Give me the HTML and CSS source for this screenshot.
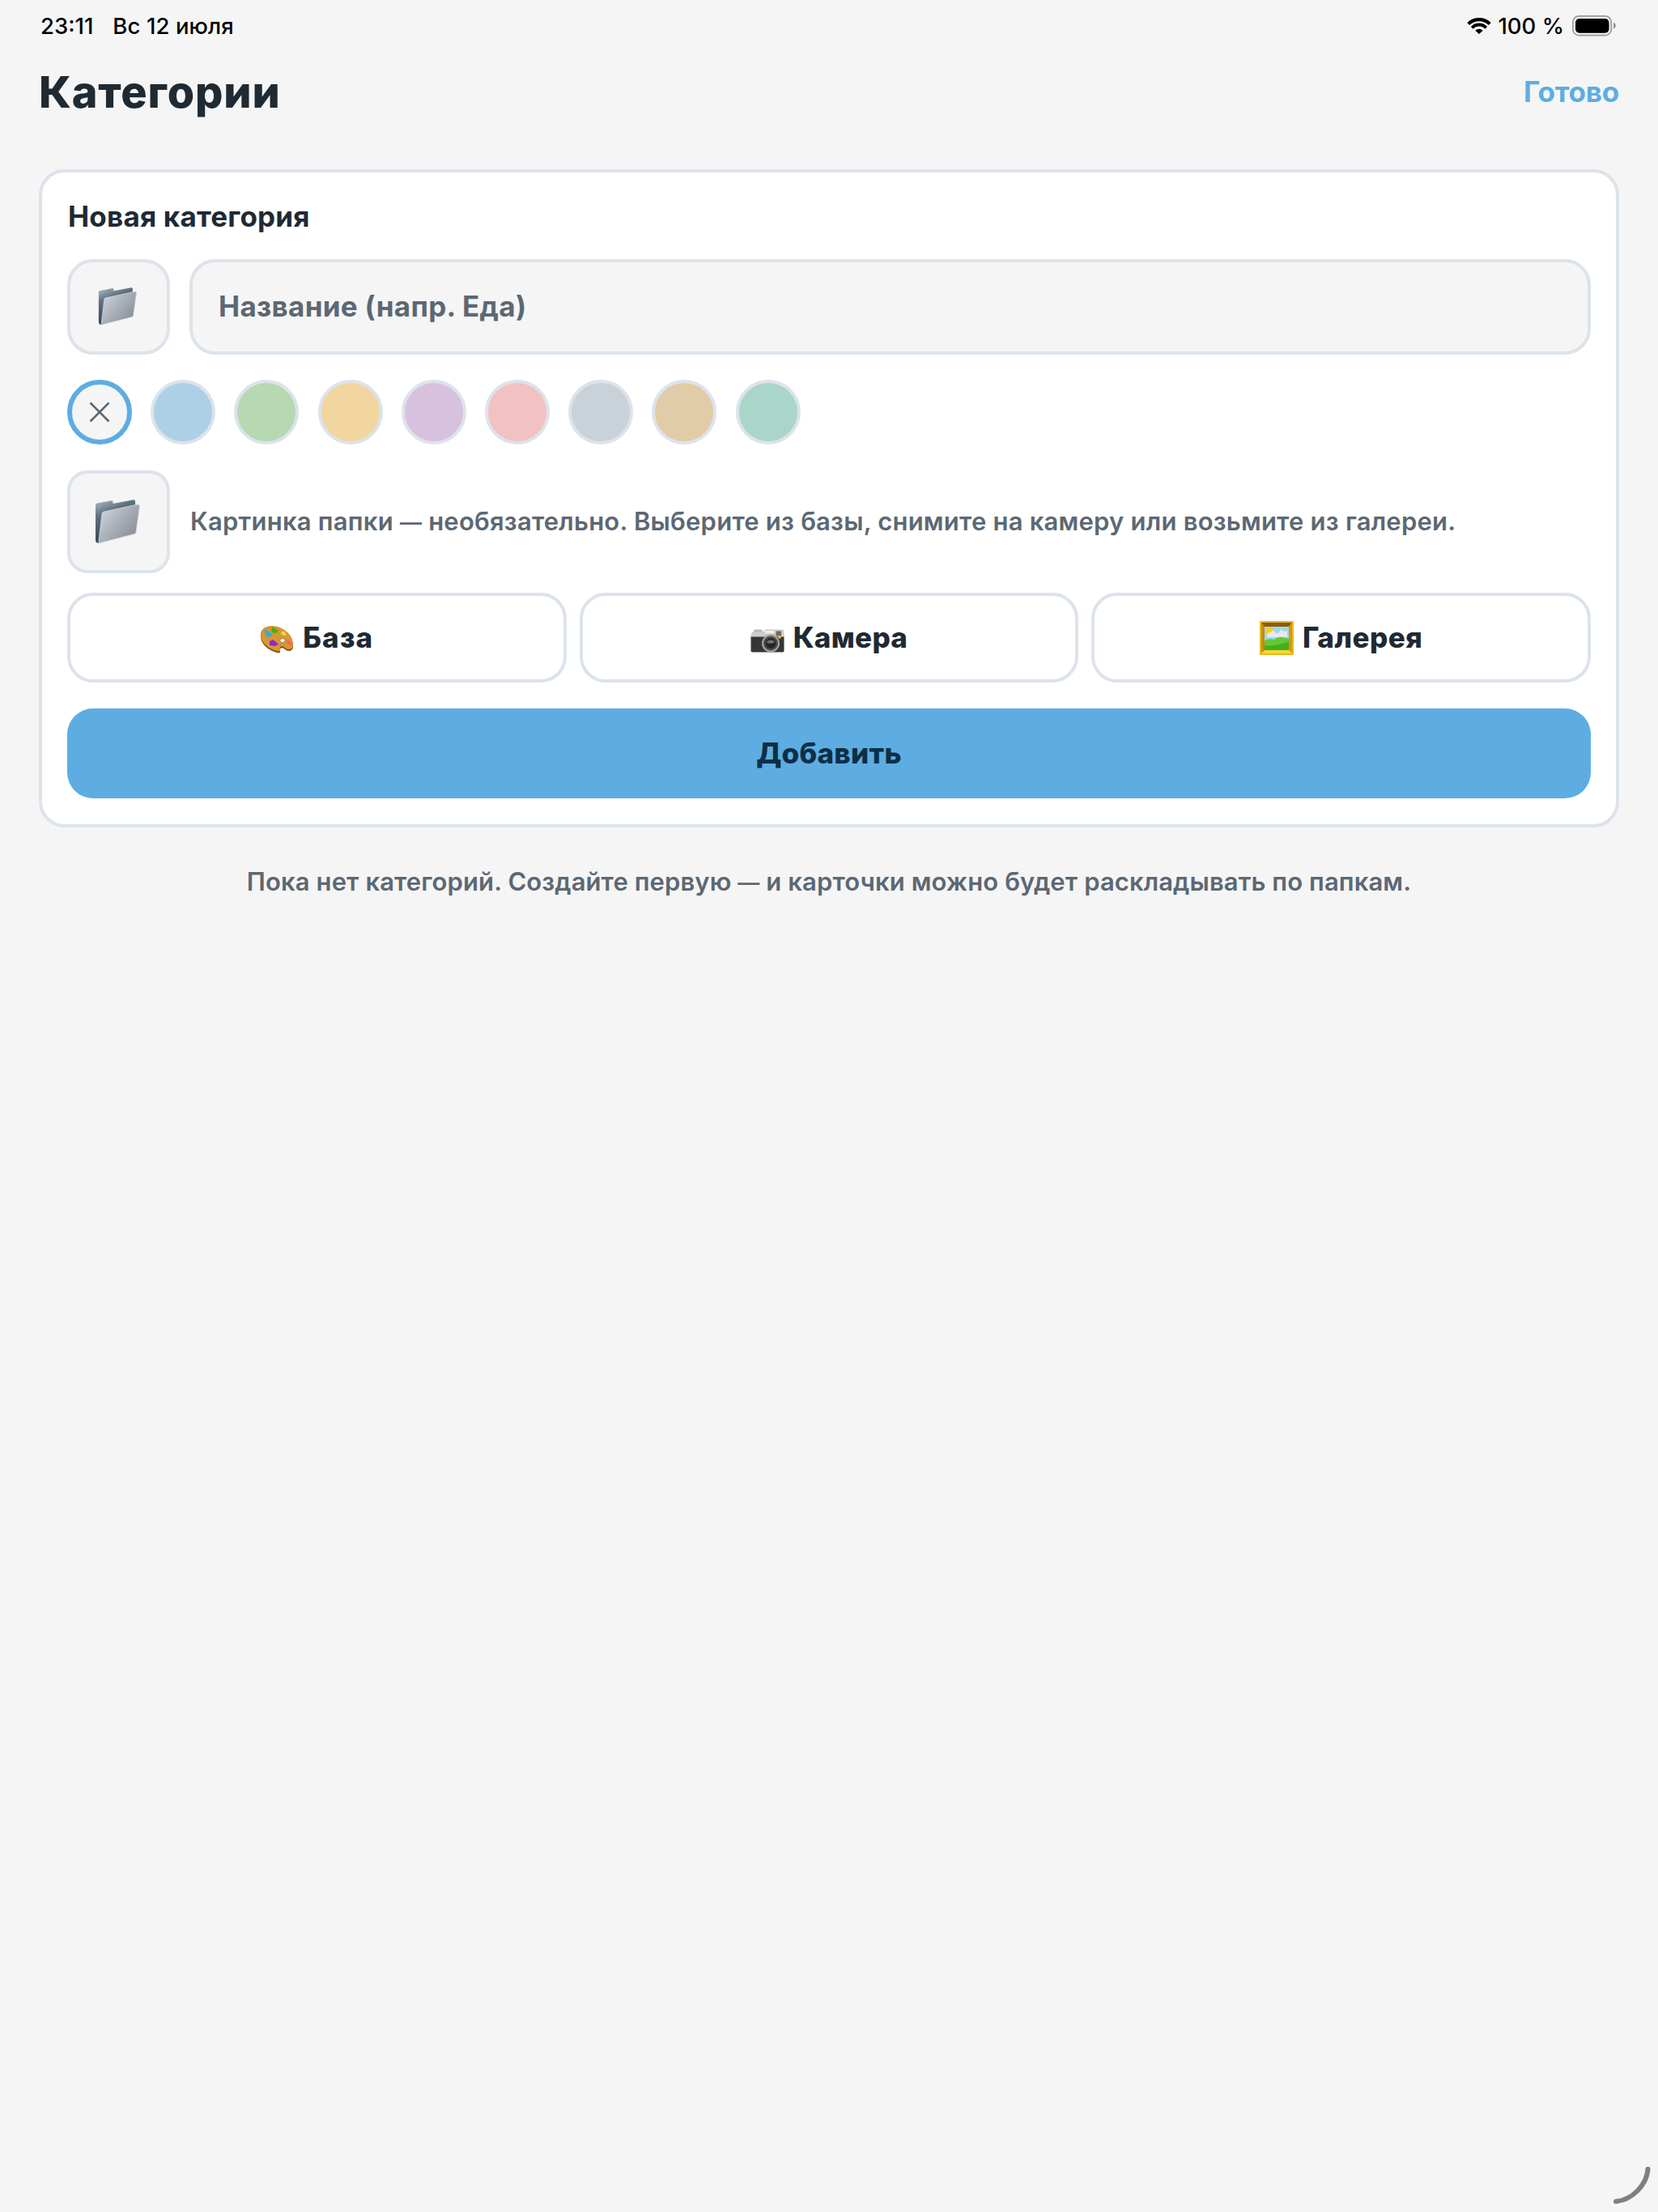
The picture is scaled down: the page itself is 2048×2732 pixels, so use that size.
FILE: index.html
```html
<!DOCTYPE html>
<html lang="ru">
  <head>
    <meta charset="UTF-8">
    <meta name="viewport" content="width=device-width, initial-scale=1.0">
    <title>Категории</title>
    <link rel="stylesheet" href="styles.css">
  </head>
  <body>
    <!-- Shared icons -->
    <svg class="defs" width="0" height="0">
      <defs>
        <linearGradient id="folder-back" x1="0" y1="0" x2="0.4" y2="1">
          <stop offset="0" stop-color="#b4c0c9"/>
          <stop offset="0.35" stop-color="#5f717f"/>
          <stop offset="1" stop-color="#2c3c49"/>
        </linearGradient>
        <linearGradient id="folder-front" x1="0" y1="0" x2="1" y2="0.8">
          <stop offset="0" stop-color="#d3dbe5"/>
          <stop offset="0.5" stop-color="#abb1b9"/>
          <stop offset="1" stop-color="#868b91"/>
        </linearGradient>
        <symbol id="folder" viewBox="0 0 56 56">
          <path d="M1 7Q1 5 3 4.600L21 1.200Q22.500 1 22.500 3V5L48 .2Q50 0 50 2V12L8 53Q1 55 1 50Z" fill="url(#folder-back)"/>
          <path d="M9 17.500Q9.300 15.500 11.300 15L53 6Q55.700 5.700 55.500 8L51 40Q50.700 42 49 42.500L7 53.500Q4.500 54 5 51Z" fill="url(#folder-front)" stroke="#d3dae1" stroke-width="0.800"/>
        </symbol>
      </defs>
    </svg>

    <div class="status-bar">
      <span class="status-time">23:11</span>
      <span class="status-date">Вс 12 июля</span>
      <svg class="wifi" viewBox="0 0 30 20">
        <path d="M1.800 7.600A18.500 18.500 0 0 1 28.200 7.600" fill="none" stroke="#000" stroke-width="4.200"/>
        <path d="M6.300 12.300A12 12 0 0 1 23.700 12.300" fill="none" stroke="#000" stroke-width="4"/>
        <path d="M10.300 15.700A6.500 6.500 0 0 1 19.700 15.700L15 20Z" fill="#000"/>
      </svg>
      <span class="status-percent">100 %</span>
      <svg class="battery" viewBox="0 0 55 26">
        <rect x="0.900" y="0.900" width="47.400" height="23.800" rx="7.500" fill="none" stroke="#999" stroke-width="1.700"/>
        <rect x="4" y="4" width="41.500" height="17.700" rx="4.800" fill="#000"/>
        <path d="M51 8.500Q54 10 54 12.800T51 17Z" fill="#999"/>
      </svg>
    </div>

    <header class="header">
      <h1>Категории</h1>
      <a class="done">Готово</a>
    </header>

    <main class="card">
      <h2>Новая категория</h2>

      <div class="name-row">
        <div class="icon-box">
          <svg class="folder-small"><use href="#folder"/></svg>
        </div>
        <div class="name-input"><span>Название (напр. Еда)</span></div>
      </div>

      <div class="colors">
        <div class="color none">
          <svg class="cross" viewBox="0 0 26 26"><path d="M1.500 1.500L24.500 24.500M24.500 1.500L1.500 24.500"/></svg>
        </div>
        <div class="color blue"></div>
        <div class="color green"></div>
        <div class="color yellow"></div>
        <div class="color purple"></div>
        <div class="color pink"></div>
        <div class="color gray"></div>
        <div class="color sand"></div>
        <div class="color mint"></div>
      </div>

      <div class="picture-row">
        <div class="picture-box">
          <svg class="folder-large"><use href="#folder"/></svg>
        </div>
        <p class="hint">Картинка папки <span class="dash">—</span> необязательно. Выберите из базы, снимите на камеру или возьмите из галереи.</p>
      </div>

      <div class="sources">
        <div class="button">
          <svg class="emoji" viewBox="0 0 42 42">
            <g transform="translate(0 5)">
              <path d="M1 14C0 5 7 1 15 1C29 1 42 13 41 26C40.500 32 34 32 31 29C28 26 24 27 25 30C26 33 24 34 21 33C10 30 2 23 1 14Z" fill="#7e5021" transform="translate(0 1)"/>
              <path d="M1 13C0 5 7 1 15 1C29 1 42 13 41 25C40.500 31 34 31 31 28C28 25 24 26 25 29C26 32 24 33 21 32C10 29 2 22 1 13Z" fill="#d69734"/>
              <ellipse cx="28" cy="19" rx="3.200" ry="2.500" fill="#fff" stroke="#8b5b26" stroke-width="0.700"/>
              <path d="M5 6L9 7L13 9L15 13L11 15L7 12Z" fill="#36a9dc"/>
              <path d="M15 2L18 4L22 6L22 9L17 10L14 7Z" fill="#38b51d"/>
              <path d="M26 8L30 8L33 12L30 13L27 12Z" fill="#f6d832"/>
              <path d="M12 20L16 18L20 21L23 24L18 26L12 25Z" fill="#9428c4"/>
              <path d="M33 18L37 20L40 24L37 25L34 22Z" fill="#fb6251"/>
            </g>
          </svg>
          <span class="label-base">База</span>
        </div>
        <div class="button">
          <svg class="emoji" viewBox="0 0 42 42">
            <g transform="translate(0 9.500)">
              <path d="M4 3Q4 1 6 1H13Q15 1 15 3V6H4Z" fill="#b9b9b9"/>
              <path d="M.5 9Q.5 4 4 4H16L18 1H39Q41.500 1 41.500 4V12H.5Z" fill="#cdcdcd"/>
              <path d="M.5 10H41.500V27Q41.500 29 40 29H2Q.5 29 .5 27Z" fill="#363636"/>
              <rect x="18" y="2.500" width="11" height="3.500" fill="#f7efd0"/>
              <rect x="31.500" y="3" width="6.500" height="6" fill="#74685d"/>
              <circle cx="36" cy="10.500" r="1.800" fill="#f2c71b"/>
              <circle cx="25" cy="18" r="11" fill="#a3a3a3"/>
              <circle cx="25" cy="18" r="9" fill="#4c4c4c"/>
              <circle cx="25" cy="18" r="6.500" fill="#262626"/>
              <path d="M20 16Q25 12 30 16L28 18H21Z" fill="#6f7477"/>
            </g>
          </svg>
          <span class="label-camera">Камера</span>
        </div>
        <div class="button">
          <svg class="emoji" viewBox="0 0 42 42">
            <rect width="42" height="42" rx="1" fill="#e9b921"/>
            <path d="M2 2H40L36 7H6Z" fill="#8c5907"/>
            <path d="M2 2L6 7V36L2 40Z" fill="#c58a12"/>
            <path d="M40 2L36 7V36L40 40Z" fill="#d29a15"/>
            <path d="M2 40L6 36H36L40 40Z" fill="#f9d730"/>
            <rect x="6" y="7" width="30" height="29" fill="#9bd9e8"/>
            <circle cx="12" cy="12" r="4.500" fill="#f4d018"/>
            <path d="M9 19Q9 14 14 14Q17 9 20 15Q24 16 26 10Q29 14 34 12V20H9Z" fill="#e6e8ed"/>
            <path d="M6 24Q13 21 18 23Q24 17 36 22V36H6Z" fill="#62c936"/>
            <path d="M6 30Q20 32 36 25V36H6Z" fill="#43ae22"/>
          </svg>
          <span class="label-gallery">Галерея</span>
        </div>
      </div>

      <div class="button primary"><span class="label-add">Добавить</span></div>
    </main>

    <p class="empty">Пока нет категорий. Создайте первую <span class="dash">—</span> и карточки можно будет раскладывать по папкам.</p>

    <svg class="corner" viewBox="0 0 48 48"><path d="M42.500 3C41 23 23 41 3 43"/></svg>
  </body>
</html>
```
FILE: styles.css
```css
* {
  box-sizing: border-box;
}

body {
  margin: 0;
  height: 2732px;
  padding: 0 48px;
  overflow: hidden;
  font-family: Inter, "Liberation Sans", sans-serif;
  color: #1f2a33;
  background-color: #f5f5f5;
}

h1,
h2,
p {
  margin: 0;
}

span,
p,
h1,
h2,
.done {
  white-space: nowrap;
}

.defs {
  position: absolute;
}

.status-bar {
  display: flex;
  align-items: center;
  height: 64px;
  padding: 0 3px 0 2px;
  font-size: 27.500px;
  font-weight: 500;
  color: #000;
}

.status-date {
  margin-left: 24px;
  letter-spacing: 0.100px;
}

.wifi {
  width: 30px;
  height: 20px;
  margin-left: auto;
}

.status-percent {
  margin-left: 8px;
}

.battery {
  width: 55px;
  height: 26px;
  margin-left: 10px;
}

.header {
  display: flex;
  align-items: center;
  justify-content: space-between;
  height: 98px;
}

h1 {
  font-size: 54px;
  font-weight: 800;
  letter-spacing: 0.850px;
}

.done {
  font-size: 35px;
  font-weight: 700;
  letter-spacing: -0.200px;
  color: #5dade2;
}

.card {
  height: 813px;
  margin-top: 47px;
  padding: 31px;
  border: 4px solid #dce3eb;
  border-radius: 32px;
  background-color: #fff;
}

h2 {
  height: 48px;
  margin-bottom: 28px;
  padding-left: 1px;
  font-size: 35px;
  font-weight: 700;
  letter-spacing: 0.200px;
  line-height: 46px;
}

.name-row {
  display: flex;
  gap: 24px;
  height: 118px;
}

.icon-box,
.picture-box {
  display: flex;
  align-items: center;
  justify-content: center;
  width: 127px;
  padding-right: 3px;
  border: 4px solid #dce3eb;
  border-radius: 32px;
  background-color: #f5f5f5;
}

.folder-small {
  width: 48px;
  height: 48px;
}

.folder-large {
  width: 56px;
  height: 56px;
}

.name-input {
  display: flex;
  flex: 1;
  align-items: center;
  padding: 0 32px 2px;
  border: 4px solid #dce3eb;
  border-radius: 32px;
  font-size: 35px;
  font-weight: 700;
  letter-spacing: 0.300px;
  color: #5c6873;
  background-color: #f5f5f5;
}

.colors {
  display: flex;
  gap: 23.200px;
  margin-top: 31px;
}

.color {
  width: 80px;
  height: 80px;
  border: 4px solid #dce3eb;
  border-radius: 50%;
}

.none {
  display: flex;
  align-items: center;
  justify-content: center;
  border: 6px solid #5dade2;
  background-color: #f5f5f5;
}

.cross {
  width: 26px;
  height: 26px;
  fill: none;
  stroke: #5c6873;
  stroke-width: 2.600px;
}

.blue {
  background-color: #aed0e6;
}

.green {
  background-color: #b6d9b1;
}

.yellow {
  background-color: #f1d6a0;
}

.purple {
  background-color: #d8c1df;
}

.pink {
  background-color: #f2c2c2;
}

.gray {
  background-color: #c9d1d9;
}

.sand {
  background-color: #e0cca6;
}

.mint {
  background-color: #a9d6c9;
}

.picture-row {
  display: flex;
  align-items: center;
  gap: 25px;
  margin-top: 32px;
}

.picture-box {
  height: 127px;
  border-radius: 25px;
}

.hint,
.empty {
  font-size: 31px;
  font-weight: 600;
  color: #5c6873;
}

.hint {
  padding-bottom: 2px;
  letter-spacing: 0.220px;
}

.dash {
  font-size: 27px;
}

.sources {
  display: grid;
  grid-template-columns: repeat(3, 1fr);
  gap: 16px;
  margin-top: 24px;
}

.button {
  display: flex;
  align-items: center;
  justify-content: center;
  gap: 11px;
  height: 111px;
  border: 4px solid #dce3eb;
  border-radius: 32px;
  font-size: 35px;
  font-weight: 800;
}

.button span {
  padding-bottom: 2px;
  letter-spacing: 0.300px;
}

.button .label-base {
  letter-spacing: 1.200px;
}

.button .label-gallery {
  letter-spacing: 0.500px;
}

.emoji {
  width: 42px;
  height: 42px;
}

.primary {
  margin-top: 32px;
  border: none;
  color: #0d2f45;
  background-color: #5dade2;
}

.empty {
  margin-top: 48px;
  letter-spacing: 0.100px;
  text-align: center;
}

/* Pencil handle over the screen corner */
.corner {
  position: absolute;
  right: 7px;
  bottom: 8px;
  width: 48px;
  height: 48px;
  fill: none;
  stroke: #808080;
  stroke-width: 6px;
  stroke-linecap: round;
}
```
